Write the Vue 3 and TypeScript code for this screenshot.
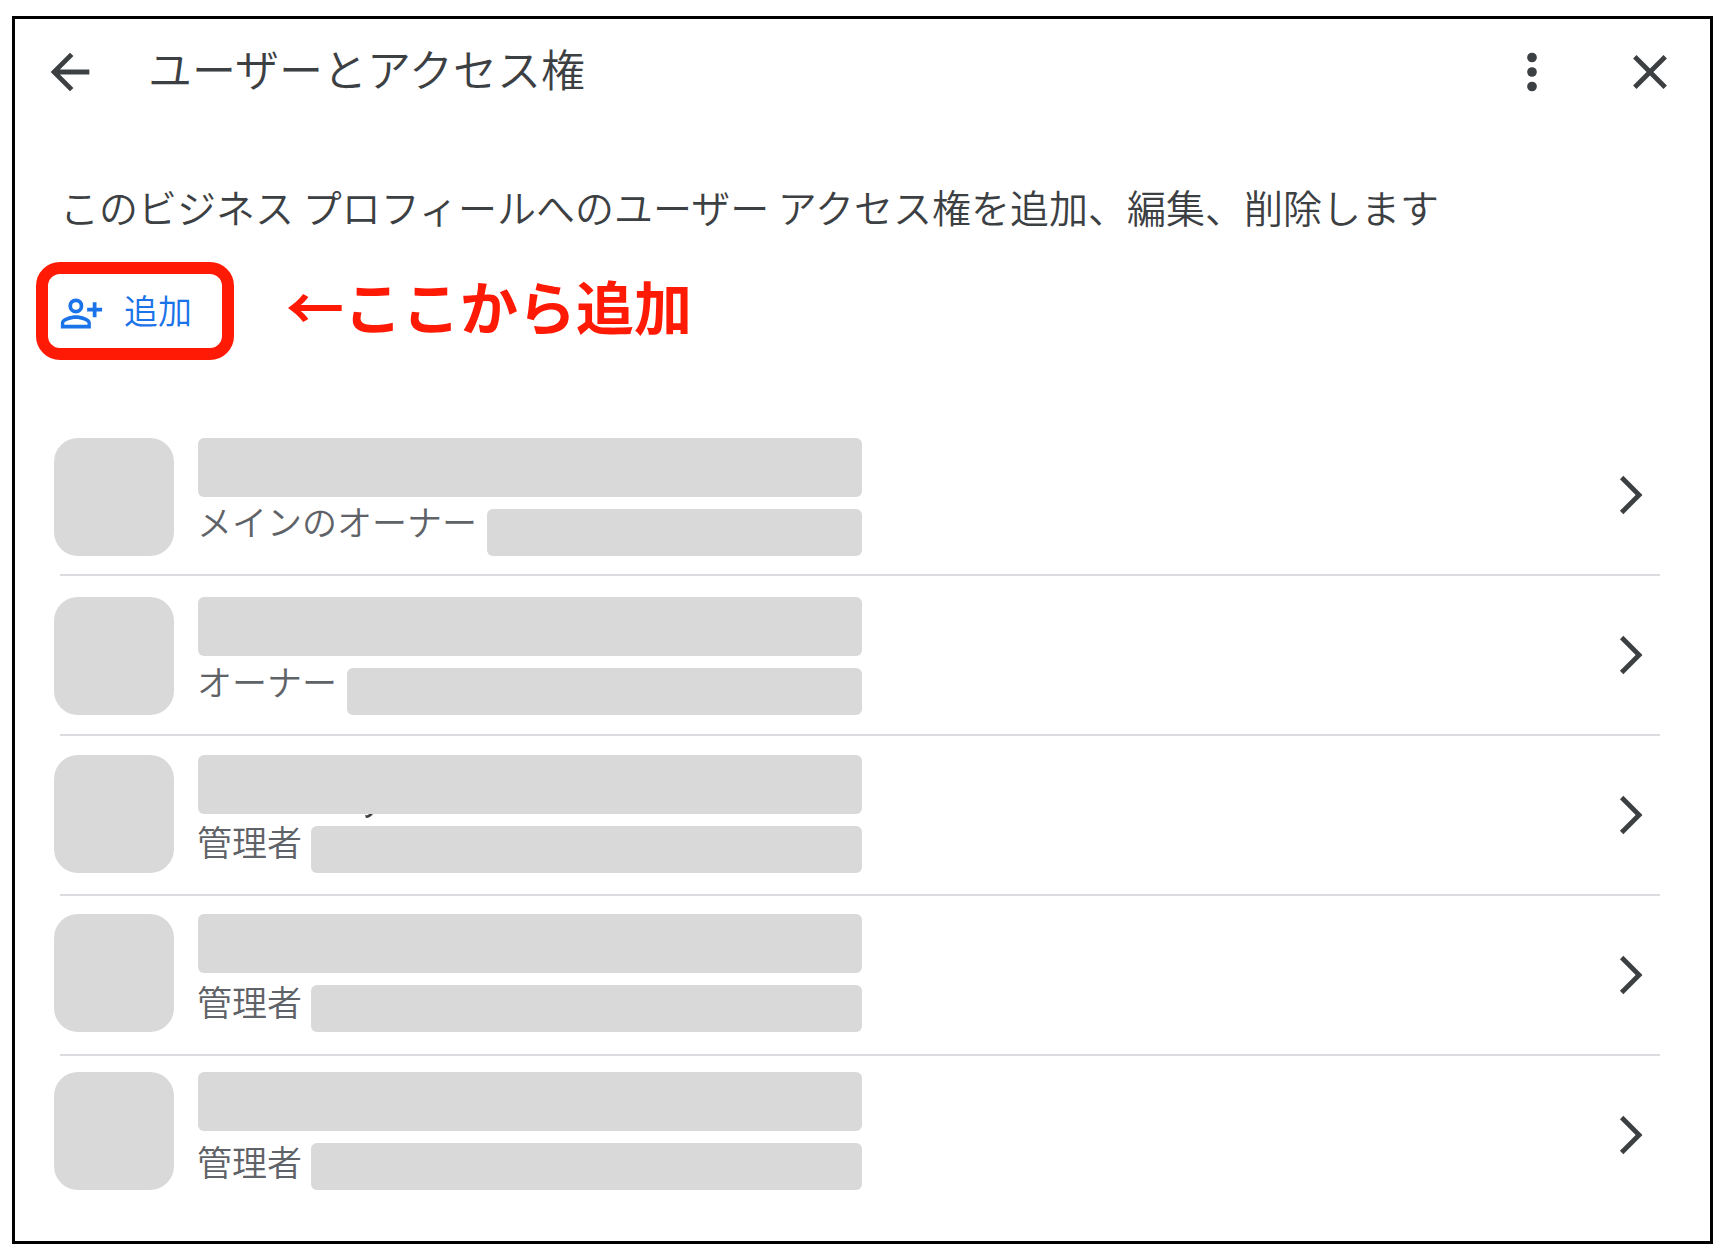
<script setup lang="ts">
interface Member {
  id: number
  role: string
  detailWidth: number
  trace?: boolean
}

const members: Member[] = [
  { id: 1, role: 'メインのオーナー', detailWidth: 375 },
  { id: 2, role: 'オーナー', detailWidth: 515 },
  { id: 3, role: '管理者', detailWidth: 551, trace: true },
  { id: 4, role: '管理者', detailWidth: 551 },
  { id: 5, role: '管理者', detailWidth: 551 },
]
</script>

<template>
  <div class="page">
    <main class="panel">
      <header class="header">
        <button class="icon-button" type="button" aria-label="戻る">
          <svg viewBox="0 0 24 24"><path d="M20 11H7.83l5.59-5.59L12 4l-8 8 8 8 1.41-1.41L7.83 13H20v-2z" /></svg>
        </button>
        <h1 class="title">ユーザーとアクセス権</h1>
        <button class="icon-button" type="button" aria-label="その他">
          <svg viewBox="0 0 24 24">
            <circle cx="12" cy="6" r="2" /><circle cx="12" cy="12" r="2" /><circle cx="12" cy="18" r="2" />
          </svg>
        </button>
        <button class="icon-button" type="button" aria-label="閉じる">
          <svg viewBox="0 0 24 24">
            <path d="M19 6.41L17.59 5 12 10.59 6.41 5 5 6.41 10.59 12 5 17.59 6.41 19 12 13.41 17.59 19 19 17.59 13.41 12z" />
          </svg>
        </button>
      </header>

      <p class="description">このビジネス プロフィールへのユーザー アクセス権を追加、編集、削除します</p>

      <div class="actions">
        <button class="add" type="button">
          <svg viewBox="0 -1 24 24">
            <path fill-rule="evenodd" d="M9 4a4 4 0 1 0 0 8 4 4 0 0 0 0-8zm0 2a2 2 0 1 1 0 4 2 2 0 0 1 0-4z" />
            <path fill-rule="evenodd" d="M9 13c-2.67 0-8 1.34-8 4v3h16v-3c0-2.66-5.33-4-8-4zM2.800 18.100v-.9C2.800 16.400 6 15 9 15s6.200 1.400 6.200 2.200v.9z" />
            <path d="M18 6h2v3h3v2h-3v3h-2v-3h-3V9h3z" />
          </svg>
          <span>追加</span>
        </button>
        <strong class="note">←ここから追加</strong>
      </div>

      <div class="members">
        <ul class="list">
          <li v-for="member in members" :key="member.id" class="item">
            <button class="row" type="button">
              <span class="role">{{ member.role }}</span>
              <svg class="chevron" viewBox="0 0 24 24"><path d="M6.23 20.23L8 22l10-10L8 2 6.23 3.77 14.46 12z" /></svg>
            </button>
          </li>
        </ul>

        <!-- Grey blocks laid over each member's avatar, name and address -->
        <div class="masks" aria-hidden="true">
          <div v-for="member in members" :key="member.id" class="mask">
            <div class="block avatar"></div>
            <div class="lines">
              <div class="block name"></div>
              <div class="block detail" :style="{ width: member.detailWidth + 'px' }"></div>
              <svg v-if="member.trace" class="trace" viewBox="0 0 8 4"><path d="M0 1Q3 2 4 0H8Q5 4 1 4Z" /></svg>
            </div>
          </div>
        </div>
      </div>
    </main>
  </div>
</template>

<style>
body {
  background: #fff;
}
</style>

<style scoped>
.page {
  padding: 16px 19px 16px 12px;
  font-family: "Noto Sans CJK JP DemiLight", "Noto Sans CJK JP", sans-serif;
  font-weight: 350;
  color: #3c4043;
}

.panel {
  border: 3px solid #000;
  padding-bottom: 25px;
}

button {
  margin: 0;
  padding: 0;
  border: 0;
  background: none;
  font: inherit;
  color: inherit;
  cursor: pointer;
}

svg {
  display: block;
  fill: currentColor;
}

.header {
  display: flex;
  align-items: center;
  gap: 60px;
  padding: 24px 31px 0 26px;
}

.icon-button,
.icon-button svg {
  width: 58px;
  height: 58px;
}

.title {
  flex: 1;
  margin: 0 0 0 -11px;
  padding-bottom: 8px;
  font-size: 44px;
  font-weight: inherit;
  line-height: 50px;
}

.description {
  margin: 75px 45px 0;
  font-size: 39px;
  line-height: 60px;
}

.actions {
  display: flex;
  align-items: center;
  gap: 52px;
  margin: 26px 21px 0;
}

.add {
  display: flex;
  align-items: center;
  gap: 20px;
  box-sizing: border-box;
  width: 198px;
  height: 98px;
  padding-left: 11px;
  border: 12px solid #ff1a05;
  border-radius: 24px;
  font-size: 34px;
  color: #1a73e8;
}

.add svg {
  width: 45px;
  height: 45px;
}

.add span {
  padding-bottom: 4px;
}

.note {
  padding-bottom: 12px;
  font-family: "Noto Sans CJK JP", sans-serif;
  font-size: 58px;
  font-weight: 700;
  line-height: 80px;
  color: #ff1a05;
}

.members {
  position: relative;
  margin: 56px 50px 0 45px;
}

.list {
  margin: 0;
  padding: 0;
  list-style: none;
}

.item {
  border-bottom: 2px solid #dadce0;
}

.item:last-child {
  border-color: transparent;
}

.row {
  display: flex;
  align-items: center;
  justify-content: space-between;
  width: 100%;
  height: 158px;
  padding: 0 6px 0 137px;
}

.role {
  align-self: flex-end;
  padding-bottom: 28px;
  font-size: 35px;
  line-height: 50px;
  color: #5f6368;
}

.chevron {
  width: 46px;
  height: 46px;
}

.masks {
  position: absolute;
  top: 22px;
  bottom: 26px;
  left: -6px;
  display: flex;
  flex-direction: column;
  justify-content: space-between;
  pointer-events: none;
}

.mask {
  display: flex;
  gap: 24px;
}

.block {
  border-radius: 6px;
  background: #d9d9d9;
}

.avatar {
  width: 120px;
  height: 118px;
  border-radius: 24px;
}

.lines {
  position: relative;
  display: flex;
  flex-direction: column;
  align-items: flex-end;
  gap: 12px;
}

.name {
  width: 664px;
  height: 59px;
}

.detail {
  height: 47px;
}

.trace {
  position: absolute;
  top: 59px;
  left: 167px;
  width: 8px;
  height: 4px;
}
</style>
